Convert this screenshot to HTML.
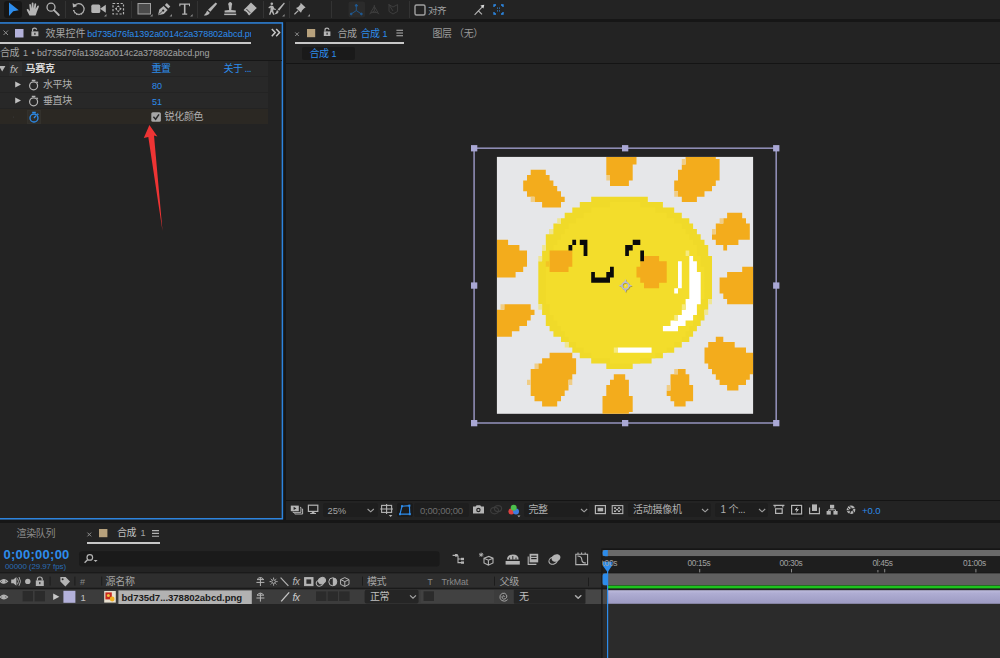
<!DOCTYPE html>
<html lang="zh-CN">
<head>
<meta charset="utf-8">
<title>After Effects</title>
<style>
*{box-sizing:border-box;margin:0;padding:0}
html,body{width:1000px;height:658px;overflow:hidden;background:#161616}
body{position:relative;font-family:"Liberation Sans","Noto Sans CJK SC",sans-serif;font-size:11px;color:#a8a8a8;line-height:1}
.abs{position:absolute}
.t{position:absolute;white-space:nowrap;line-height:14px;height:14px}
.blue{color:#2d8ceb}
svg{position:absolute;overflow:visible}
/* toolbar */
#toolbar{left:0;top:0;width:1000px;height:19px;background:#232323}
/* left panel */
#lp{left:0;top:22px;width:283px;height:497.6px;background:#232323}
#rp{left:286px;top:22px;width:714px;height:498px;background:#232323}
#tl{left:0;top:523px;width:1000px;height:135px;background:#232323}
.row{position:absolute;left:0;width:268px;height:15px;background:#282828}
.lat{font-size:9px;letter-spacing:-0.05px}
.dd{background:#1e1e1e;border-radius:2px}
.rl{top:555.5px;font-size:8.4px;color:#a0a0a0;letter-spacing:-0.38px}
</style>
</head>
<body>
<!-- TOOLBAR -->
<div id="toolbar" class="abs">
 <div class="abs" style="left:4px;top:1px;width:18px;height:17px;background:#161616;border-radius:3px"></div>
 <svg style="left:0;top:0" width="520" height="19" viewBox="0 0 520 19">
  <!-- selection arrow -->
  <path d="M9 2.6 L18.8 10.2 L13.2 11.2 L9 15.9 Z" fill="#2d8ceb"/>
  <!-- hand -->
  <path d="M29.5 15.5 L27 10.8 Q26.2 9.3 27.3 9 Q28.2 8.8 29 10 L30 11.2 L29.3 5 Q29.2 3.9 30 3.9 Q30.8 3.9 31 5 L31.7 8.5 L31.7 3.6 Q31.7 2.6 32.6 2.6 Q33.5 2.6 33.5 3.6 L33.6 8.4 L34.5 4 Q34.7 3.1 35.5 3.2 Q36.3 3.4 36.2 4.4 L35.6 8.9 L37.3 6 Q37.8 5.2 38.5 5.6 Q39.1 6 38.8 6.9 L36.8 12 Q36.2 14 35.5 15.5 Z" fill="#b4b4b4"/>
  <!-- magnifier -->
  <circle cx="51" cy="7.2" r="4" fill="none" stroke="#b4b4b4" stroke-width="1.3"/>
  <path d="M54 10.2 L58.8 15" stroke="#b4b4b4" stroke-width="1.8" stroke-linecap="round"/>
  <!-- sep -->
  <rect x="65" y="1" width="1" height="17" fill="#333"/>
  <!-- rotate -->
  <path d="M74.5 5.8 A5.3 5.3 0 1 1 73.6 10" fill="none" stroke="#b4b4b4" stroke-width="1.2"/>
  <path d="M73.6 10 A5.3 5.3 0 0 0 83 12.6" fill="none" stroke="#b4b4b4" stroke-width="1.2" stroke-dasharray="1.2 1.2"/>
  <path d="M72.6 3 L73 7.6 L77.2 6 Z" fill="#b4b4b4"/>
  <!-- camera -->
  <rect x="91.3" y="4.6" width="9" height="8.4" rx="1.6" fill="#b4b4b4"/>
  <path d="M100 8.8 L105.8 4.8 L105.8 12.8 Z" fill="#b4b4b4"/>
  <path d="M106.5 14 L106.5 16.5 L104 16.5 Z" fill="#8a8a8a"/>
  <!-- pan behind -->
  <rect x="113" y="3.5" width="10.5" height="10.5" fill="none" stroke="#b4b4b4" stroke-width="1.2" stroke-dasharray="2.2 1.6"/>
  <path d="M114.8 8.8 L117 7.2 L117 10.4 Z M121.8 8.8 L119.6 7.2 L119.6 10.4 Z M118.3 5.3 L116.8 7 L119.8 7 Z M118.3 12.3 L116.8 10.6 L119.8 10.6 Z" fill="#b4b4b4"/>
  <rect x="131" y="1" width="1" height="17" fill="#333"/>
  <!-- rect tool -->
  <rect x="138" y="3.5" width="12.5" height="10.5" fill="#4b4b4b" stroke="#a0a0a0" stroke-width="1"/>
  <path d="M152.6 14 L152.6 16.5 L150.1 16.5 Z" fill="#8a8a8a"/>
  <!-- pen -->
  <path d="M158 15.2 L159.3 9.6 L163.6 6 L167.6 10 L163.8 14 Z" fill="#b4b4b4"/>
  <path d="M164.8 5 L166.8 3 L170.3 6.6 L168.4 8.6 Z" fill="#b4b4b4"/>
  <circle cx="163.2" cy="10.6" r="1.1" fill="#232323"/>
  <path d="M158.3 15 L162.6 11" stroke="#232323" stroke-width="0.8"/>
  <path d="M172 14 L172 16.5 L169.5 16.5 Z" fill="#8a8a8a"/>
  <!-- T -->
  <path d="M179.3 3.4 H190 V6.2 H189 V4.8 H185.5 V13.6 H187.2 V14.8 H182.2 V13.6 H183.9 V4.8 H180.4 V6.2 H179.3 Z" fill="#b4b4b4"/>
  <path d="M192.6 14 L192.6 16.5 L190.1 16.5 Z" fill="#8a8a8a"/>
  <rect x="197" y="1" width="1" height="17" fill="#333"/>
  <!-- brush -->
  <path d="M215.6 2.4 L217.2 3.8 L210.4 11.8 L208 9.8 Z" fill="#b4b4b4"/>
  <path d="M207.2 10.6 L209.8 12.8 Q208.8 15.6 203.8 15.6 Q206 13.6 207.2 10.6 Z" fill="#b4b4b4"/>
  <!-- stamp -->
  <path d="M228.6 5.4 A2 2 0 1 1 231.8 5.4 L231.3 10 L235.8 10.6 L235.8 12.6 L224.6 12.6 L224.6 10.6 L229.1 10 Z" fill="#b4b4b4"/>
  <rect x="224.2" y="13.6" width="12" height="1.5" fill="#b4b4b4"/>
  <!-- eraser -->
  <path d="M251 2.6 L256.8 8 L249.2 15.4 L243.6 10 Z" fill="#b4b4b4"/>
  <path d="M245.3 11.6 L247.6 13.8" stroke="#232323" stroke-width="1" />
  <path d="M246.4 9 L250.2 12.8" stroke="#232323" stroke-width="0.9"/>
  <rect x="263" y="1" width="1" height="17" fill="#333"/>
  <!-- roto brush -->
  <circle cx="271.8" cy="3.8" r="1.3" fill="#b4b4b4"/>
  <path d="M268.4 7.2 L271 5.6 L273.2 6 L274.4 8.4 L276 9 L275.6 10 L273.4 9.4 L273.2 11 L274.6 14.6 L273.4 15 L271.6 11.8 L270.2 15 L269 14.6 L270.4 10.6 L270.6 7.6 L269 8.4 Z" fill="#b4b4b4"/>
  <path d="M284 2.6 L284.8 3.4 L279.2 10.8 L277.6 9.4 Z" fill="#b4b4b4"/>
  <path d="M277 10 L278.6 11.5 Q278 14.4 274.6 14.2 Q276.2 12.8 277 10 Z" fill="#b4b4b4"/>
  <path d="M284.6 14 L284.6 16.5 L282.1 16.5 Z" fill="#8a8a8a"/>
  <rect x="289" y="1" width="1" height="17" fill="#333"/>
  <!-- pin -->
  <path d="M300.6 2.8 L305.6 7.6 L304.2 8.2 L302 10.6 L301 12.8 L296 8 L298.2 7 L300.4 4.6 Z" fill="#b4b4b4"/>
  <path d="M298.2 10.6 L294.4 14.4" stroke="#b4b4b4" stroke-width="1.3"/>
  <path d="M310 14 L310 16.5 L307.5 16.5 Z" fill="#8a8a8a"/>
  <rect x="331" y="1" width="1" height="17" fill="#333"/>
  <!-- axis modes -->
  <rect x="348.5" y="1.5" width="16.5" height="16" rx="2" fill="#2b2b2b"/>
  <g stroke="#1e5a94" stroke-width="0.9" fill="#1e5a94">
   <path d="M356.3 5.4 V10.6 L351.4 13.8 M356.3 10.6 L361.2 13.8" fill="none"/>
   <path d="M356.3 4 L355 6 H357.6 Z"/><circle cx="351.2" cy="14" r="0.9"/><circle cx="361.4" cy="14" r="0.9"/>
  </g>
  <g stroke="#3d3d3d" stroke-width="1" fill="none">
   <path d="M374.3 5 V11 L369.4 14 M374.3 11 L379.2 14 M374.3 6.4 L370.6 12.6 H378 Z"/>
   <path d="M389 4.6 L393 7 L397.6 4.6 V11.4 L393 14 L389 11.4 Z M388.6 4.2 L393 11"/>
  </g>
  <rect x="409" y="1" width="1" height="17" fill="#333"/>
  <!-- snap checkbox -->
  <rect x="415" y="5" width="10" height="10" rx="1.5" fill="none" stroke="#a0a0a0" stroke-width="1.4"/>
  <!-- expand -->
  <path d="M474.6 14.8 L478.4 10.8 L482 14.4" fill="none" stroke="#b4b4b4" stroke-width="1.1"/>
  <path d="M478.4 10.8 L482.6 6.6" stroke="#b4b4b4" stroke-width="1.1"/>
  <path d="M484.3 4.8 L480.4 5.6 L483.4 8.6 Z" fill="#dcdcdc"/>
  <!-- blue dotted -->
  <g stroke="#2d8ceb" stroke-width="1.3" fill="none">
   <path d="M494 7 V5 H496 M501 5 H503 V7 M503 12 V14 H501 M496 14 H494 V12"/>
   <path d="M497.2 8.2 h0.8 M499.2 8.2 h0.8 M497.2 10.8 h0.8 M499.2 10.8 h0.8" />
  </g>
 </svg>
 <div class="t" style="left:428px;top:3.5px;font-size:9.6px;color:#a0a0a0;letter-spacing:-0.5px">对齐</div>
</div>

<!-- LEFT PANEL : effect controls -->
<div id="lp" class="abs"></div>
<svg style="left:0;top:0" width="290" height="525" viewBox="0 0 290 525"><rect x="-3" y="22.95" width="285.4" height="495.8" fill="none" stroke="#2d84de" stroke-width="1.5"/></svg>
<div class="abs" id="lpc" style="left:0;top:0;width:282px;height:520px;overflow:hidden">
 <!-- tab -->
 <div class="abs" style="left:0;top:42px;width:251px;height:2px;background:#c8c8c8"></div>
 <svg style="left:0;top:22px" width="282" height="22" viewBox="0 22 282 22">
  <path d="M3.5 30.5 L8 35 M8 30.5 L3.5 35" stroke="#8c8c8c" stroke-width="1"/>
  <rect x="15" y="29" width="8.5" height="8.5" fill="#b3b1da"/>
  <path d="M32.6 31.6 V30 Q32.6 28.2 34.6 28.2 Q36.4 28.2 36.6 29.8" fill="none" stroke="#b4b4b4" stroke-width="1.2"/>
  <rect x="31.4" y="31.4" width="7" height="4.8" fill="#b4b4b4"/>
  <rect x="34.3" y="32.8" width="1.2" height="2" fill="#232323"/>
  <path d="M271.8 29 L275.2 32.6 L271.8 36.2 M276.2 29 L279.6 32.6 L276.2 36.2" fill="none" stroke="#c8c8c8" stroke-width="1.5"/>
 </svg>
 <div class="abs" style="left:0;top:24px;width:251px;height:18px;overflow:hidden">
  <div class="t" style="left:45.5px;top:2.5px;font-size:10px;color:#a4a4a4">效果控件 <span class="blue lat" style="margin-left:-1px">bd735d76fa1392a0014c2a378802abcd.png</span></div>
 </div>
 <!-- subheader -->
 <div class="t" style="left:0;top:46px;font-size:10px;color:#a4a4a4"><span style="letter-spacing:-0.6px">合成</span> <span class="lat" style="margin-left:1.5px">1 <span style="margin-left:1px">•</span> bd735d76fa1392a0014c2a378802abcd.png</span></div>
 <div class="abs" style="left:0;top:60px;width:282px;height:1px;background:#161616"></div>
 <!-- rows -->
 <div class="row" style="top:61px"></div>
 <div class="row" style="top:77px"></div>
 <div class="row" style="top:93px"></div>
 <div class="row" style="top:109px;background:#2b2823"></div>
 <div class="abs" style="left:9px;top:62px;width:13px;height:14px;background:#2e2e2e"></div>
 <div class="abs" style="left:27px;top:110px;width:14px;height:14px;background:#2f2d29;border:1px solid #33312c"></div>
 <svg style="left:0;top:61px" width="282" height="64" viewBox="0 61 282 64">
  <path d="M-1 66 H5.4 L2.2 71.6 Z" fill="#b4b4b4"/>
  <path d="M15.2 81.6 L21 84.6 L15.2 87.6 Z M15.2 97.6 L21 100.6 L15.2 103.6 Z" fill="#c0c0c0"/>
  <g fill="none" stroke="#b4b4b4" stroke-width="1.2">
   <circle cx="33.6" cy="85.8" r="4"/><path d="M31.8 80.4 H35.4 M36.6 81.6 L37.8 82.8" />
   <circle cx="33.6" cy="101.8" r="4"/><path d="M31.8 96.4 H35.4 M36.6 97.6 L37.8 98.8"/>
  </g>
  <g fill="none" stroke="#2d8ceb" stroke-width="1.3">
   <circle cx="34" cy="118" r="4"/><path d="M32.2 112.4 H35.8 M37.2 113.6 L38.4 114.8 M34 118 L36 115.6"/>
  </g>
  <rect x="13" y="116.6" width="1" height="1" fill="#3a3a3a"/>
  <rect x="151.3" y="112.2" width="9.6" height="9.6" rx="1.5" fill="#a6a6a6"/>
  <path d="M153.4 116.8 L155.6 119.2 L159 114.4" fill="none" stroke="#2a2a2a" stroke-width="1.5"/>
  <path d="M149.4 125 L157.4 136.5 L154 135.6 L162.5 231 L148.3 137 L143.8 138 Z" fill="#ee3434"/>
 </svg>
 <div class="t" style="left:10px;top:62px;font-size:11px;font-style:italic;color:#b4b4b4;letter-spacing:-0.6px">fx</div>
 <div class="t" style="left:25.5px;top:62px;font-size:10px;font-weight:bold;color:#dadada;letter-spacing:-0.3px">马赛克</div>
 <div class="t blue" style="left:151.5px;top:62px;font-size:10px;letter-spacing:-0.6px">重置</div>
 <div class="t blue" style="left:223.5px;top:62px;font-size:10px;letter-spacing:-0.6px">关于 ...</div>
 <div class="t" style="left:43px;top:78px;font-size:10px;color:#b0b0b0;letter-spacing:-0.4px">水平块</div>
 <div class="t" style="left:43px;top:94px;font-size:10px;color:#b0b0b0;letter-spacing:-0.4px">垂直块</div>
 <div class="t blue lat" style="left:152px;top:79px">80</div>
 <div class="t blue lat" style="left:152px;top:95px">51</div>
 <div class="t" style="left:164.5px;top:110px;font-size:10px;color:#b0b0b0;letter-spacing:-0.3px">锐化颜色</div>
</div>

<!-- RIGHT PANEL : composition viewer -->
<div id="rp" class="abs"></div>
<!-- right panel header -->
<div class="abs" style="left:295px;top:42px;width:109px;height:2px;background:#c8c8c8"></div>
<svg style="left:286px;top:22px" width="230" height="22" viewBox="286 22 230 22">
 <path d="M295.2 32.4 L298.8 36 M298.8 32.4 L295.2 36" stroke="#8c8c8c" stroke-width="1"/>
 <rect x="307" y="29" width="8.2" height="8.2" fill="#b7a17c"/>
 <path d="M325 31.6 V30 Q325 28.2 327 28.2 Q328.8 28.2 329 29.8" fill="none" stroke="#b4b4b4" stroke-width="1.2"/>
 <rect x="323.8" y="31.4" width="6.6" height="4.6" fill="#b4b4b4"/>
 <rect x="326.5" y="32.7" width="1.2" height="2" fill="#232323"/>
 <path d="M396.4 30.2 H403 M396.4 33 H403 M396.4 35.8 H403" stroke="#b4b4b4" stroke-width="1.1"/>
</svg>
<div class="t" style="left:337.5px;top:26.5px;font-size:10px;color:#a4a4a4;letter-spacing:-0.6px">合成</div>
<div class="t blue" style="left:360.5px;top:26.5px;font-size:10px;letter-spacing:-0.6px">合成 <span class="lat" style="margin-left:1px">1</span></div>
<div class="t" style="left:432.5px;top:26.5px;font-size:10px;color:#9a9a9a;letter-spacing:-0.4px">图层 （无）</div>
<div class="abs" style="left:302px;top:47px;width:53px;height:13px;background:#1a1a1a;border-radius:2px"></div>
<div class="t blue" style="left:309.5px;top:47px;font-size:10px;letter-spacing:-0.6px">合成 <span class="lat" style="margin-left:1px">1</span></div>
<div class="abs" style="left:286px;top:62.5px;width:714px;height:1px;background:#141414"></div>
<!-- viewer toolbar -->
<div class="abs" style="left:286px;top:500px;width:714px;height:1px;background:#141414"></div>
<div class="abs dd" style="left:322.5px;top:503px;width:55px;height:14px"></div>
<div class="abs dd" style="left:397px;top:503px;width:15.5px;height:14px;background:#1b1b1b"></div>
<div class="abs dd" style="left:414px;top:503px;width:55px;height:14px"></div>
<div class="abs dd" style="left:524px;top:503px;width:65px;height:14px"></div>
<div class="abs dd" style="left:628px;top:503px;width:82.5px;height:14px"></div>
<div class="abs dd" style="left:715px;top:503px;width:52.5px;height:14px"></div>
<div class="abs dd" style="left:789.5px;top:503px;width:14.5px;height:14px;background:#1b1b1b"></div>
<div class="t lat" style="left:327.5px;top:503.5px;font-size:9.4px;color:#a4a4a4">25%</div>
<div class="t lat" style="left:420px;top:503.5px;font-size:9.5px;color:#6e6e6e;letter-spacing:-0.2px">0;00;00;00</div>
<div class="t" style="left:528.5px;top:503px;font-size:10px;color:#b0b0b0;letter-spacing:-0.4px">完整</div>
<div class="t" style="left:633px;top:503px;font-size:10px;color:#b0b0b0;letter-spacing:-0.25px">活动摄像机</div>
<div class="t" style="left:720.5px;top:503px;font-size:10px;color:#b0b0b0;letter-spacing:-0.4px"><span class="lat" style="font-size:10px">1</span> 个...</div>
<div class="t blue lat" style="left:862px;top:503.5px;font-size:9.5px">+0.0</div>
<svg style="left:286px;top:501px" width="714" height="19" viewBox="286 501 714 19">
 <!-- always preview -->
 <g fill="#b4b4b4"><rect x="290.8" y="505.6" width="8" height="5.6"/><path d="M300 507.4 H300.9 V512.4 H293 V511.6 M301.8 509 H302.6 V514 H294.8 V513.2" fill="none" stroke="#b4b4b4" stroke-width="1"/></g>
 <path d="M293.6 506.8 L296.4 508.4 L293.6 510 Z" fill="#232323"/>
 <!-- monitor -->
 <rect x="308.4" y="505.2" width="9.4" height="6.2" fill="none" stroke="#b4b4b4" stroke-width="1.2"/>
 <path d="M311.8 512 H314.4 V513 H316 V514 H310.2 V513 H311.8 Z" fill="#b4b4b4"/>
 <!-- chevrons -->
 <g fill="none" stroke="#a0a0a0" stroke-width="1.1">
  <path d="M367.6 509 L370.7 511.8 L373.8 509"/>
  <path d="M581 509 L584.1 511.8 L587.2 509"/>
  <path d="M702 509 L705.1 511.8 L708.2 509"/>
  <path d="M759 509 L762.1 511.8 L765.2 509"/>
 </g>
 <!-- region of interest -->
 <g fill="none" stroke="#b4b4b4" stroke-width="1.1">
  <rect x="381.6" y="505.4" width="10" height="7"/>
  <path d="M386.6 504 V514 M380.2 509 H393"/>
 </g>
 <path d="M388.8 515 H392.4 L390.6 517 Z" fill="#b4b4b4"/>
 <!-- mask toggle blue -->
 <g fill="none" stroke="#2d8ceb" stroke-width="1.2">
  <path d="M400 514.2 L402 506.2 L409.4 505.6 L409.8 514.2 Z"/>
 </g>
 <g fill="#2d8ceb"><rect x="399" y="513.2" width="2" height="2"/><rect x="401" y="505.2" width="2" height="2"/><rect x="408.4" y="504.6" width="2" height="2"/><rect x="408.8" y="513.2" width="2" height="2"/></g>
 <!-- camera -->
 <path d="M473 506.6 H475.6 L476.6 505.2 H480.2 L481.2 506.6 H484 V513.6 H473 Z" fill="#b4b4b4"/>
 <circle cx="478.4" cy="510" r="2.2" fill="#232323"/><circle cx="478.4" cy="510" r="1.1" fill="#b4b4b4"/>
 <!-- show snapshot (dim) -->
 <g fill="none" stroke="#3c3c3c" stroke-width="1.2"><ellipse cx="494.6" cy="510.6" rx="4" ry="3.2"/><ellipse cx="498" cy="508.6" rx="3.6" ry="3"/></g>
 <!-- rgb -->
 <circle cx="511.4" cy="511.6" r="3" fill="#e04040"/><circle cx="516" cy="511.6" r="3" fill="#3f7de0"/><circle cx="513.7" cy="507.8" r="3" fill="#4cc04c"/>
 <path d="M517.4 515.6 H520.4 L518.9 517.2 Z" fill="#b4b4b4"/>
 <!-- fast preview / transparency -->
 <rect x="595.4" y="505.6" width="10" height="8" fill="none" stroke="#b4b4b4" stroke-width="1.2"/><rect x="597.6" y="507.8" width="5.6" height="3.6" fill="#b4b4b4"/>
 <rect x="612.2" y="505.6" width="10.6" height="8" fill="none" stroke="#b4b4b4" stroke-width="1.1"/>
 <g fill="#b4b4b4"><rect x="614" y="507.2" width="2" height="1.6"/><rect x="618" y="507.2" width="2" height="1.6"/><rect x="616" y="508.8" width="2" height="1.6"/><rect x="620" y="508.8" width="1.4" height="1.6"/><rect x="614" y="510.4" width="2" height="1.6"/><rect x="618" y="510.4" width="2" height="1.6"/></g>
 <!-- right icons -->
 <g fill="none" stroke="#b4b4b4" stroke-width="1.2">
  <path d="M773.4 505.4 H784.4 M775 505.4 V507.4 M782.8 505.4 V507.4"/><rect x="775.6" y="508.8" width="6.6" height="4.6"/>
  <rect x="791.6" y="505.4" width="10" height="8.6"/>
  <path d="M809.6 507.4 V513.6 H819.4 V507.4"/><rect x="812.6" y="505" width="3.8" height="5.4" fill="#b4b4b4"/>
 </g>
 <path d="M797.6 506.6 L794.6 510.2 H796.8 L795.8 513 L799 509.2 H796.8 Z" fill="#d0d0d0"/>
 <g fill="#b4b4b4"><rect x="830" y="504.8" width="4.2" height="3.6"/><rect x="826.6" y="511" width="4.2" height="3.6"/><rect x="833.4" y="511" width="4.2" height="3.6"/></g>
 <path d="M832.1 508.4 V509.8 H828.7 V511 M832.1 509.8 H835.5 V511" fill="none" stroke="#b4b4b4" stroke-width="1"/>
 <!-- aperture -->
 <circle cx="851" cy="509.8" r="4.3" fill="#b4b4b4"/>
 <g stroke="#232323" stroke-width="0.9"><path d="M849 505.8 L852.6 509 M855 508.2 L850.6 509.6 M854 513 L852 508.8 M849.6 514 L851.4 509.6 M846.8 510.6 L851 510.8 M847.4 507.4 L850.6 511"/></g>
 <circle cx="851" cy="509.8" r="1.5" fill="#232323"/>
</svg>
<svg id="sun" style="left:0;top:0" width="1000" height="658" viewBox="0 0 1000 658">
<defs><clipPath id="cimg"><rect x="496.9" y="156.9" width="256.2" height="256.9"/></clipPath></defs>
<rect x="496.9" y="156.9" width="256.2" height="256.9" fill="#e6e7e9"/>
<g clip-path="url(#cimg)">
<path fill="#f0da29" d="M579.8 358.2 579.8 352.8 572.3 352.8 572.3 347.4 568.5 347.4 568.5 342.0 561.0 342.0 561.0 336.7 553.4 336.7 553.4 331.3 549.6 331.3 549.6 325.9 545.8 325.9 545.8 315.1 542.1 315.1 542.1 304.3 538.3 304.3 538.3 261.3 542.1 261.3 542.1 250.5 545.8 250.5 545.8 234.3 549.6 234.3 549.6 229.0 553.4 229.0 553.4 223.6 561.0 223.6 561.0 218.2 564.7 218.2 564.7 212.8 572.3 212.8 572.3 207.4 579.8 207.4 579.8 202.0 591.2 202.0 591.2 196.7 647.8 196.7 647.8 202.0 662.9 202.0 662.9 207.4 674.2 207.4 674.2 212.8 681.8 212.8 681.8 218.2 689.3 218.2 689.3 223.6 693.1 223.6 693.1 229.0 696.9 229.0 696.9 234.3 700.7 234.3 700.7 239.7 704.5 239.7 704.5 245.1 708.2 245.1 708.2 255.9 712.0 255.9 712.0 299.0 708.2 299.0 708.2 309.7 704.5 309.7 704.5 320.5 700.7 320.5 700.7 325.9 696.9 325.9 696.9 331.3 693.1 331.3 693.1 336.7 689.3 336.7 689.3 342.0 681.8 342.0 681.8 347.4 674.2 347.4 674.2 352.8 662.9 352.8 662.9 358.2 651.6 358.2 651.6 363.6 632.7 363.6 632.7 369.0 606.3 369.0 606.3 363.6 591.2 363.6 591.2 358.2z"/>
<path fill="#f3dd2b" d="M610.0 282.8 610.0 277.4 613.8 277.4 613.8 266.7 610.0 266.7 610.0 272.0 606.3 272.0 606.3 277.4 594.9 277.4 594.9 272.0 591.2 272.0 591.2 282.8zM681.8 315.1 674.2 315.1 674.2 320.5 670.5 320.5 670.5 325.9 662.9 325.9 662.9 331.3 678.0 331.3 678.0 325.9 685.6 325.9 685.6 320.5 693.1 320.5 693.1 315.1 696.9 315.1 696.9 320.5 693.1 320.5 693.1 325.9 689.3 325.9 689.3 331.3 685.6 331.3 685.6 336.7 681.8 336.7 681.8 342.0 674.2 342.0 674.2 347.4 666.7 347.4 666.7 352.8 655.4 352.8 655.4 358.2 640.3 358.2 640.3 363.6 610.0 363.6 610.0 358.2 591.2 358.2 591.2 352.8 583.6 352.8 583.6 347.4 576.1 347.4 576.1 342.0 568.5 342.0 568.5 336.7 564.7 336.7 564.7 331.3 561.0 331.3 561.0 325.9 557.2 325.9 557.2 320.5 553.4 320.5 553.4 315.1 549.6 315.1 549.6 304.3 545.8 304.3 545.8 266.7 549.6 266.7 549.6 272.0 568.5 272.0 568.5 266.7 572.3 266.7 572.3 245.1 576.1 245.1 576.1 239.7 572.3 239.7 572.3 245.1 568.5 245.1 568.5 250.5 553.4 250.5 553.4 245.1 557.2 245.1 557.2 239.7 561.0 239.7 561.0 234.3 564.7 234.3 564.7 229.0 568.5 229.0 568.5 223.6 576.1 223.6 576.1 218.2 583.6 218.2 583.6 212.8 591.2 212.8 591.2 207.4 610.0 207.4 610.0 202.0 640.3 202.0 640.3 207.4 655.4 207.4 655.4 212.8 666.7 212.8 666.7 218.2 674.2 218.2 674.2 223.6 681.8 223.6 681.8 229.0 685.6 229.0 685.6 234.3 689.3 234.3 689.3 239.7 693.1 239.7 693.1 245.1 696.9 245.1 696.9 255.9 700.7 255.9 700.7 266.7 704.5 266.7 704.5 299.0 700.7 299.0 700.7 272.0 696.9 272.0 696.9 261.3 693.1 261.3 693.1 255.9 689.3 255.9 689.3 250.5 685.6 250.5 685.6 255.9 689.3 255.9 689.3 299.0 685.6 299.0 685.6 304.3 681.8 304.3zM587.4 239.7 579.8 239.7 579.8 245.1 583.6 245.1 583.6 255.9 587.4 255.9zM681.8 288.2 681.8 261.3 678.0 261.3 678.0 288.2 674.2 288.2 674.2 293.6 678.0 293.6 678.0 288.2zM666.7 282.8 666.7 261.3 659.1 261.3 659.1 255.9 644.0 255.9 644.0 250.5 640.3 250.5 640.3 266.7 636.5 266.7 636.5 277.4 640.3 277.4 640.3 282.8 644.0 282.8 644.0 288.2 659.1 288.2 659.1 282.8zM613.8 347.4 613.8 352.8 651.6 352.8 651.6 347.4zM632.7 245.1 625.2 245.1 625.2 255.9 628.9 255.9 628.9 250.5 632.7 250.5zM632.7 245.1 640.3 245.1 640.3 239.7 632.7 239.7zM700.7 309.7 696.9 309.7 696.9 304.3 700.7 304.3z"/>
<path fill="#f3ac1c" d="M534.5 401.3 534.5 395.9 530.7 395.9 530.7 369.0 538.3 369.0 538.3 363.6 542.1 363.6 542.1 358.2 549.6 358.2 549.6 352.8 572.3 352.8 572.3 358.2 576.1 358.2 576.1 374.3 572.3 374.3 572.3 379.7 568.5 379.7 568.5 390.5 564.7 390.5 564.7 395.9 561.0 395.9 561.0 401.3 557.2 401.3 557.2 406.6 542.1 406.6 542.1 401.3zM670.5 374.3 678.0 374.3 678.0 369.0 685.6 369.0 685.6 374.3 689.3 374.3 689.3 385.1 693.1 385.1 693.1 401.3 685.6 401.3 685.6 406.6 674.2 406.6 674.2 401.3 670.5 401.3 670.5 395.9 666.7 395.9 666.7 390.5 670.5 390.5zM549.6 250.5 572.3 250.5 572.3 266.7 568.5 266.7 568.5 272.0 549.6 272.0zM610.0 185.9 610.0 175.1 606.3 175.1 606.3 153.6 636.5 153.6 636.5 164.4 632.7 164.4 632.7 180.5 628.9 180.5 628.9 185.9zM557.2 185.9 557.2 191.3 561.0 191.3 561.0 196.7 564.7 196.7 564.7 202.0 561.0 202.0 561.0 207.4 542.1 207.4 542.1 202.0 534.5 202.0 534.5 196.7 527.0 196.7 527.0 191.3 523.2 191.3 523.2 180.5 527.0 180.5 527.0 175.1 530.7 175.1 530.7 169.7 545.8 169.7 545.8 175.1 549.6 175.1 549.6 180.5 553.4 180.5 553.4 185.9zM674.2 180.5 678.0 180.5 678.0 169.7 681.8 169.7 681.8 164.4 685.6 164.4 685.6 153.6 715.8 153.6 715.8 159.0 719.6 159.0 719.6 180.5 715.8 180.5 715.8 185.9 712.0 185.9 712.0 191.3 704.5 191.3 704.5 196.7 696.9 196.7 696.9 202.0 681.8 202.0 681.8 196.7 678.0 196.7 678.0 191.3 674.2 191.3zM715.8 342.0 715.8 336.7 723.3 336.7 723.3 342.0 734.7 342.0 734.7 347.4 746.0 347.4 746.0 352.8 753.5 352.8 753.5 374.3 749.8 374.3 749.8 379.7 746.0 379.7 746.0 385.1 738.4 385.1 738.4 390.5 727.1 390.5 727.1 385.1 719.6 385.1 719.6 379.7 715.8 379.7 715.8 374.3 712.0 374.3 712.0 369.0 708.2 369.0 708.2 363.6 704.5 363.6 704.5 347.4 708.2 347.4 708.2 342.0zM508.1 239.7 508.1 245.1 519.4 245.1 519.4 250.5 527.0 250.5 527.0 266.7 523.2 266.7 523.2 272.0 515.6 272.0 515.6 277.4 496.8 277.4 496.8 239.7zM659.1 255.9 659.1 261.3 666.7 261.3 666.7 282.8 659.1 282.8 659.1 288.2 644.0 288.2 644.0 282.8 640.3 282.8 640.3 277.4 636.5 277.4 636.5 266.7 640.3 266.7 640.3 261.3 644.0 261.3 644.0 255.9zM738.4 245.1 727.1 245.1 727.1 250.5 723.3 250.5 723.3 245.1 715.8 245.1 715.8 239.7 712.0 239.7 712.0 234.3 715.8 234.3 715.8 223.6 723.3 223.6 723.3 218.2 727.1 218.2 727.1 212.8 742.2 212.8 742.2 218.2 746.0 218.2 746.0 223.6 749.8 223.6 749.8 239.7 738.4 239.7zM727.1 304.3 727.1 299.0 723.3 299.0 723.3 293.6 719.6 293.6 719.6 277.4 727.1 277.4 727.1 272.0 742.2 272.0 742.2 266.7 753.5 266.7 753.5 304.3zM519.4 325.9 519.4 331.3 511.9 331.3 511.9 336.7 496.8 336.7 496.8 309.7 504.3 309.7 504.3 304.3 530.7 304.3 530.7 309.7 534.5 309.7 534.5 315.1 530.7 315.1 530.7 320.5 527.0 320.5 527.0 325.9zM625.2 379.7 628.9 379.7 628.9 395.9 632.7 395.9 632.7 412.0 628.9 412.0 628.9 417.4 602.5 417.4 602.5 395.9 606.3 395.9 606.3 385.1 610.0 385.1 610.0 379.7 613.8 379.7 613.8 374.3 625.2 374.3z"/>
<path fill="#ffffff" d="M617.6 352.8 617.6 347.4 651.6 347.4 651.6 352.8zM678.0 325.9 678.0 331.3 662.9 331.3 662.9 325.9 670.5 325.9 670.5 320.5 678.0 320.5 678.0 315.1 681.8 315.1 681.8 309.7 685.6 309.7 685.6 299.0 689.3 299.0 689.3 255.9 693.1 255.9 693.1 261.3 696.9 261.3 696.9 272.0 700.7 272.0 700.7 304.3 696.9 304.3 696.9 315.1 693.1 315.1 693.1 320.5 685.6 320.5 685.6 325.9zM678.0 288.2 678.0 261.3 681.8 261.3 681.8 288.2zM678.0 288.2 678.0 293.6 674.2 293.6 674.2 288.2z"/>
<path fill="#0a0a0a" d="M591.2 272.0 594.9 272.0 594.9 277.4 606.3 277.4 606.3 272.0 610.0 272.0 610.0 266.7 613.8 266.7 613.8 277.4 610.0 277.4 610.0 282.8 591.2 282.8zM628.9 255.9 625.2 255.9 625.2 245.1 632.7 245.1 632.7 250.5 628.9 250.5zM644.0 250.5 644.0 261.3 640.3 261.3 640.3 250.5zM632.7 245.1 632.7 239.7 640.3 239.7 640.3 245.1zM579.8 239.7 587.4 239.7 587.4 255.9 583.6 255.9 583.6 245.1 579.8 245.1zM576.1 239.7 576.1 245.1 572.3 245.1 572.3 239.7zM572.3 245.1 572.3 250.5 568.5 250.5 568.5 245.1z"/>
<path fill="#efe692" d="M549.6 234.3 549.6 229.0 553.4 229.0 553.4 234.3zM542.1 309.7 538.3 309.7 538.3 304.3 542.1 304.3zM564.7 342.0 568.5 342.0 568.5 347.4 564.7 347.4zM704.5 309.7 708.2 309.7 708.2 315.1 704.5 315.1zM538.3 261.3 538.3 255.9 542.1 255.9 542.1 261.3zM557.2 223.6 557.2 218.2 561.0 218.2 561.0 223.6zM542.1 250.5 542.1 245.1 545.8 245.1 545.8 250.5zM708.2 299.0 712.0 299.0 712.0 304.3 708.2 304.3z"/>
<path fill="#f0cd85" d="M712.0 229.0 715.8 229.0 715.8 234.3 712.0 234.3zM534.5 202.0 530.7 202.0 530.7 196.7 534.5 196.7zM568.5 379.7 572.3 379.7 572.3 385.1 568.5 385.1zM666.7 385.1 670.5 385.1 670.5 390.5 666.7 390.5zM723.3 223.6 719.6 223.6 719.6 218.2 723.3 218.2zM538.3 369.0 534.5 369.0 534.5 363.6 538.3 363.6zM610.0 175.1 610.0 180.5 606.3 180.5 606.3 175.1zM685.6 164.4 681.8 164.4 681.8 159.0 685.6 159.0zM504.3 309.7 500.5 309.7 500.5 304.3 504.3 304.3zM530.7 385.1 527.0 385.1 527.0 379.7 530.7 379.7zM674.2 196.7 674.2 191.3 678.0 191.3 678.0 196.7zM678.0 374.3 674.2 374.3 674.2 369.0 678.0 369.0z"/>
<path fill="#f2c424" d="M545.8 261.3 549.6 261.3 549.6 266.7 545.8 266.7z"/>
<path fill="#f6ea80" d="M681.8 309.7 681.8 304.3 685.6 304.3 685.6 309.7zM685.6 250.5 689.3 250.5 689.3 255.9 685.6 255.9zM617.6 352.8 613.8 352.8 613.8 347.4 617.6 347.4zM674.2 320.5 674.2 315.1 678.0 315.1 678.0 320.5z"/>
</g>
</svg>
<svg id="bbox" style="left:0;top:0" width="1000" height="658" viewBox="0 0 1000 658">
 <rect x="474.1" y="148.2" width="302.1" height="274.8" fill="none" stroke="#8e8cb4" stroke-width="1.6"/>
 <g fill="#a9a7d4">
  <rect x="471" y="145.1" width="6.3" height="6.3"/><rect x="622" y="145.1" width="6.3" height="6.3"/><rect x="773.1" y="145.1" width="6.3" height="6.3"/>
  <rect x="471" y="282.4" width="6.3" height="6.3"/><rect x="773.1" y="282.4" width="6.3" height="6.3"/>
  <rect x="471" y="420" width="6.3" height="6.3"/><rect x="622" y="420" width="6.3" height="6.3"/><rect x="773.1" y="420" width="6.3" height="6.3"/>
 </g>
 <!-- anchor point -->
 <g transform="translate(625.4 285.7)">
  <g transform="translate(0.7 0.7)" fill="#8f8540" stroke="none" opacity="0.8">
   <path d="M0 -6.8 L1.2 -3.6 L-1.2 -3.6 Z M0 6.8 L1.2 3.6 L-1.2 3.6 Z M-6.8 0 L-3.6 -1.2 L-3.6 1.2 Z M6.8 0 L3.6 -1.2 L3.6 1.2 Z"/>
   <circle r="3.4" fill="none" stroke="#8f8540" stroke-width="1.5"/>
  </g>
  <path d="M0 -6.8 L1.2 -3.6 L-1.2 -3.6 Z M0 6.8 L1.2 3.6 L-1.2 3.6 Z M-6.8 0 L-3.6 -1.2 L-3.6 1.2 Z M6.8 0 L3.6 -1.2 L3.6 1.2 Z" fill="#b9b9d6"/>
  <circle r="3.4" fill="none" stroke="#b9b9d6" stroke-width="1.5"/>
  <circle r="0.7" fill="#d8d8c0"/>
 </g>
</svg>

<!-- TIMELINE -->
<div id="tl" class="abs"></div>
<!-- timeline tabs -->
<div class="t" style="left:16.5px;top:527px;font-size:10px;color:#8a8a8a;letter-spacing:-0.35px">渲染队列</div>
<div class="abs" style="left:87px;top:541.6px;width:73px;height:2px;background:#c8c8c8"></div>
<svg style="left:0;top:523px" width="1000" height="135" viewBox="0 523 1000 135">
 <path d="M87.4 532.6 L91.2 536.4 M91.2 532.6 L87.4 536.4" stroke="#8c8c8c" stroke-width="1"/>
 <rect x="99" y="529" width="8.4" height="8.2" fill="#b7a17c"/>
 <path d="M152 530.6 H159 M152 533.4 H159 M152 536.2 H159" stroke="#b4b4b4" stroke-width="1.1"/>
 <!-- search box -->
 <rect x="79" y="551.2" width="360.6" height="15.4" rx="3" fill="#1a1a1a"/>
 <circle cx="89.8" cy="557.4" r="2.8" fill="none" stroke="#b4b4b4" stroke-width="1.2"/>
 <path d="M87.8 559.6 L84.6 562.8" stroke="#b4b4b4" stroke-width="1.4"/>
 <path d="M93.6 560 H97.6 L95.6 562 Z" fill="#b4b4b4"/>
 <!-- toolbar icons -->
 <g fill="none" stroke="#b4b4b4" stroke-width="1.1">
  <path d="M452.6 555.4 H458 M458 555.4 V562.6 H461 M458 559 H461"/>
  <rect x="455" y="554" width="2.6" height="2.6" fill="#b4b4b4" stroke="none"/><rect x="461" y="557.8" width="3" height="2.4" fill="#b4b4b4" stroke="none"/><rect x="461" y="561.4" width="3" height="2.4" fill="#b4b4b4" stroke="none"/>
  <path d="M484 558.2 L488.8 556.4 L493 558.2 V563 L488.4 565.2 L484 563 Z M484 558.2 L488.4 560.2 L493 558.2 M488.4 560.2 V565.2"/>
  <path d="M481.2 552.6 V556.8 M479 554.8 H483.4 M479.6 553.2 L482.8 556.4 M482.8 553.2 L479.6 556.4" stroke-width="0.9"/>
  <path d="M575.8 554.2 H587.6 V564.6 H575.8 Z M577.4 556 Q581.6 556 581.8 559.6 Q582 563 586 563 M578 552.6 V554.2 M581.6 552.6 V554.2 M585.2 552.6 V554.2"/>
 </g>
 <g fill="#b4b4b4">
  <path d="M507 559.6 Q507 554.6 512.8 554.6 Q518.6 554.6 518.6 559.6 Z"/><rect x="505.6" y="561" width="14.2" height="3.6"/>
  <rect x="529.6" y="553.8" width="8.6" height="8.6"/><path d="M528.2 556.4 V564.4 H536.4" fill="none" stroke="#b4b4b4" stroke-width="1.1"/>
  <ellipse cx="556" cy="558" rx="4.6" ry="3.6" transform="rotate(-25 556 558)"/><ellipse cx="553.2" cy="560.6" rx="4.4" ry="3.4" transform="rotate(-25 553.2 560.6)" fill="none" stroke="#b4b4b4" stroke-width="1.1"/>
 </g>
 <path d="M509.6 559.6 V557.6 M512.8 559.6 V556 M516 559.6 V557.6" stroke="#232323" stroke-width="0.9"/>
 <rect x="531.2" y="555.6" width="5.4" height="1.2" fill="#232323"/><rect x="531.2" y="558" width="5.4" height="1.2" fill="#232323"/>
 <!-- header row -->
 <rect x="0" y="572.4" width="602" height="1" fill="#161616"/>
 <rect x="0" y="573.4" width="602" height="14.4" fill="#2e2e2e"/>
 <rect x="0" y="587.8" width="1000" height="1.6" fill="#1a1a1a"/>
 <!-- layer row -->
 <rect x="0" y="589.4" width="588" height="14.6" fill="#3c3c3c"/>
 <rect x="585.4" y="589.4" width="16.2" height="14.6" fill="#464646"/>
 <!-- header icons -->
 <g fill="none" stroke="#b4b4b4" stroke-width="1.1">
  <path d="M0.2 581.4 Q3.8 577.6 7.6 581.4 Q3.8 585.2 0.2 581.4 Z"/><circle cx="3.8" cy="581.4" r="1.3" fill="#b4b4b4"/>
  <path d="M0.2 597 Q3.8 593.2 7.6 597 Q3.8 600.8 0.2 597 Z"/><circle cx="3.8" cy="597" r="1.3" fill="#b4b4b4"/>
  <path d="M17.4 578.4 Q19.6 581.4 17.4 584.4 M19 577 Q22 581.4 19 585.8" stroke-width="0.9"/>
  <path d="M37.4 580.4 V579 Q37.4 577 39.8 577 Q42.2 577 42.2 579 V580.4" stroke-width="1.2"/>
 </g>
 <g fill="#b4b4b4">
  <path d="M11.2 579.6 H13.4 L16.4 577 V585.8 L13.4 583.2 H11.2 Z"/>
  <circle cx="27.8" cy="581.4" r="2.7"/>
  <rect x="35.8" y="580.4" width="8" height="5.6"/>
  <path d="M60.4 577 H65.6 L70 581.6 L65.4 586.4 L60.4 581.6 Z"/>
 </g>
 <circle cx="62.6" cy="579.2" r="1" fill="#2e2e2e"/>
 <rect x="39.2" y="582" width="1.2" height="2.2" fill="#2e2e2e"/>
 <g fill="#1c1c1c"><rect x="49.6" y="576.6" width="1" height="9"/><rect x="74.4" y="576.6" width="1" height="9"/><rect x="101.2" y="576.6" width="1" height="9"/><rect x="362" y="576.6" width="1" height="9"/><rect x="494" y="576.6" width="1" height="9"/><rect x="588" y="577.6" width="1" height="8.6"/></g>
 <!-- layer row boxes -->
 <g fill="#2b2b2b"><rect x="22.6" y="591" width="10.4" height="10.4"/><rect x="34.6" y="591" width="10.4" height="10.4"/>
  <rect x="316" y="591.4" width="10.4" height="9.6"/><rect x="327.6" y="591.4" width="10.4" height="9.6"/><rect x="339.2" y="591.4" width="10.4" height="9.6"/>
  <rect x="423.6" y="591.4" width="10.4" height="9.6"/></g>
 <rect x="420.6" y="590" width="73.4" height="13.2" fill="#444" fill-opacity="0.6"/>
 <rect x="423.6" y="591.4" width="10.4" height="9.6" fill="#2b2b2b"/>
 <path d="M53.2 593.6 L59.4 596.8 L53.2 600 Z" fill="#c8c8c8"/>
 <rect x="63.4" y="590.8" width="12" height="12" fill="#b3b1da"/>
 <!-- file icon -->
 <rect x="104.2" y="591" width="11.6" height="11.6" fill="#e8e0d0"/>
 <rect x="105.4" y="592.4" width="6.4" height="7" fill="#c8281e"/><circle cx="112.2" cy="599" r="2.4" fill="#f0b020"/><circle cx="108.4" cy="595.4" r="1.5" fill="#f0c040"/>
 <!-- name box -->
 <rect x="118.4" y="590.4" width="133.4" height="13.6" fill="#b2b2b2"/>
 <!-- switches header -->
 <g fill="none" stroke="#b4b4b4" stroke-width="1">
  <path d="M257 579.6 Q260.4 575.4 263.8 579.6 Z M256.4 582.4 H264.4 M260.4 577.6 V586" />
  <path d="M257 595.2 Q260.4 591 263.8 595.2 Z M256.4 598 H264.4 M260.4 593.2 V601.6" />
  <circle cx="273.6" cy="581.6" r="1.8"/><path d="M273.6 577.6 V579 M273.6 584.2 V585.6 M269.6 581.6 H271 M276.2 581.6 H277.6 M270.8 578.8 L271.8 579.8 M275.4 583.4 L276.4 584.4 M276.4 578.8 L275.4 579.8 M271.8 583.4 L270.8 584.4"/>
  <path d="M280.6 577.6 L288.4 585.8" stroke-width="1.2"/>
  <path d="M281.2 601.4 L289.2 592.4" stroke-width="1.3" stroke="#c8c8c8"/>
  <rect x="304.6" y="577.6" width="8.4" height="8" fill="#b4b4b4"/>
  <ellipse cx="322" cy="580.6" rx="3.6" ry="3" transform="rotate(-30 322 580.6)" fill="#b4b4b4"/><ellipse cx="319.8" cy="583" rx="3.6" ry="3" transform="rotate(-30 319.8 583)"/>
  <circle cx="332.8" cy="581.8" r="4"/>
  <path d="M340.6 579.6 L344.8 577.6 L349 579.6 V584.4 L344.8 586.4 L340.6 584.4 Z M340.6 579.6 L344.8 581.6 L349 579.6 M344.8 581.6 V586.4"/>
 </g>
 <path d="M332.8 577.8 A4 4 0 0 1 332.8 585.8 Z" fill="#b4b4b4"/>
 <rect x="306.4" y="579.4" width="4.8" height="4.4" fill="#2e2e2e"/>
 <!-- mode dropdown -->
 <rect x="364.6" y="589.8" width="54" height="13.8" rx="2" fill="#252525"/>
 <rect x="513.8" y="589.6" width="71.6" height="14.2" rx="1" fill="#242424"/>
 <g fill="none" stroke="#a8a8a8" stroke-width="1.1"><path d="M410 595.4 L413 598.2 L416 595.4"/><path d="M575.4 595.4 L578.4 598.2 L581.4 595.4"/><path d="M574.8 595.6 L577.8 598.4 L580.8 595.6" transform="translate(0 0)" stroke="none"/>
  <path d="M575 595 L577.9 598 L580.8 595" stroke="none"/>
 </g>
 <path d="M575 594.6 L578 597.6 L581 594.6" fill="none" stroke="#a8a8a8" stroke-width="1.1" transform="translate(0 1)" opacity="0"/>
 <path d="M574.6 595.6 L577.8 598.6 L581 595.6" fill="none" stroke="#a8a8a8" stroke-width="1.1" opacity="0"/>
 <!-- pickwhip spiral -->
 <path d="M504.4 597 Q504.2 595.4 502.9 595.8 Q501.6 596.4 502.2 598 Q503.2 599.8 505.4 598.8 Q507.6 597.4 506.6 595 Q505.2 592.4 502.2 593.4 Q499.2 594.8 500 598.2 Q501 601.2 504.4 601.2 Q506.4 601 507.6 599.6" fill="none" stroke="#a4a4a4" stroke-width="1"/>
 <!-- time area -->
 <rect x="602.4" y="548.4" width="397.6" height="1.6" fill="#161616"/>
 <rect x="602.4" y="550" width="397.6" height="6.2" fill="#6a6a6a"/>
 <rect x="602.4" y="556.2" width="397.6" height="16.2" fill="#1e1e1e"/>
 <rect x="602.4" y="572.4" width="397.6" height="1" fill="#161616"/>
 <rect x="602.4" y="573.4" width="397.6" height="11.8" fill="#606060"/>
 <rect x="607.6" y="585.6" width="392.4" height="2.8" fill="#1dc41d"/>
 <rect x="602.4" y="589.4" width="5.4" height="14.6" fill="#4a4a4a"/>
 <rect x="602.4" y="604" width="397.6" height="54" fill="#2b2b2b"/>
 <rect x="601.4" y="548.4" width="1" height="110" fill="#161616"/>
 <path d="M607.8 550 H605.4 Q602.6 550 602.6 553 Q602.6 556.2 605.4 556.2 H607.8 Z" fill="#2d8ceb"/>
 <path d="M607.6 573.4 H605 Q602.6 573.4 602.6 576 V582.6 Q602.6 585.2 605 585.2 H607.6 Z" fill="#2d8ceb"/>
 <!-- layer bar -->
 <defs><linearGradient id="lb" x1="0" y1="0" x2="0" y2="1"><stop offset="0" stop-color="#bdbbdc"/><stop offset="0.25" stop-color="#aeacd2"/><stop offset="1" stop-color="#9c9ac2"/></linearGradient></defs>
 <rect x="607.8" y="590.2" width="392.2" height="13.6" fill="url(#lb)"/>
 <!-- ticks -->
 <g fill="#8a8a8a"><rect x="699.2" y="569" width="1" height="3.4"/><rect x="791" y="569" width="1" height="3.4"/><rect x="884.2" y="569" width="1" height="3.4"/><rect x="877.4" y="570" width="1" height="2.4"/><rect x="975.4" y="569" width="1" height="3.4"/></g>
 <!-- playhead -->
 <rect x="607" y="562" width="1.2" height="96" fill="#2d8ceb"/>
 <path d="M603 561.8 H611.8 V566 L607.6 572.2 L603 566 Z" fill="#2d8ceb"/>
 <!-- chevron in row (right) -->
 <path d="M575 595.4 L578 598.2 L581 595.4" fill="none" stroke="#a8a8a8" stroke-width="1.1"/>
</svg>
<div class="t" style="left:117px;top:526px;font-size:10px;color:#c0c0c0;letter-spacing:-0.6px">合成 <span class="lat" style="margin-left:2.5px;color:#a4a4a4">1</span></div>
<div class="t blue" id="tc" style="left:3.5px;top:548px;font-size:13px;font-weight:bold;letter-spacing:0.25px">0;00;00;00</div>
<div class="t" style="left:5px;top:559.8px;font-size:8px;color:#2a6cb4;letter-spacing:-0.1px">00000 (29.97 fps)</div>
<div class="t" style="left:80px;top:574.5px;font-size:9px;color:#8a8a8a">#</div>
<div class="t" style="left:105.5px;top:575.3px;font-size:10px;color:#a4a4a4;letter-spacing:-0.3px">源名称</div>
<div class="t" style="left:367px;top:575.3px;font-size:10px;color:#a4a4a4;letter-spacing:-0.6px">模式</div>
<div class="t lat" style="left:427.5px;top:574.5px;color:#8a8a8a;font-size:8.5px">T</div>
<div class="t lat" style="left:441.5px;top:574.5px;color:#8a8a8a;font-size:8.8px">TrkMat</div>
<div class="t" style="left:499.5px;top:575.3px;font-size:10px;color:#a4a4a4;letter-spacing:-0.3px">父级</div>
<div class="t" style="left:292.5px;top:574px;font-size:10.5px;font-style:italic;color:#b4b4b4;letter-spacing:-0.6px">fx</div>
<div class="t" style="left:292.5px;top:589.5px;font-size:10.5px;font-style:italic;color:#c8c8c8;letter-spacing:-0.6px">fx</div>
<div class="t lat" style="left:80.5px;top:590.5px;color:#c0c0c0;font-size:9.5px">1</div>
<div class="t" id="lname" style="left:121.5px;top:590.5px;font-size:9.6px;font-weight:bold;color:#1a1a1a;letter-spacing:-0.04px">bd735d7...378802abcd.png</div>
<div class="t" style="left:370px;top:590px;font-size:10px;color:#c0c0c0;letter-spacing:-0.6px">正常</div>
<div class="t" style="left:519px;top:590px;font-size:10px;color:#c0c0c0">无</div>
<div class="abs" style="left:602.4px;top:556px;width:40px;height:16px;overflow:hidden"><div class="t lat rl" style="left:-4px;top:-0.5px">0:00s</div></div>
<div class="t lat rl" style="left:687.5px">00:15s</div>
<div class="t lat rl" style="left:779.5px">00:30s</div>
<div class="t lat rl" style="left:872.5px">0l:45s</div>
<div class="t lat rl" style="left:963px">01:00s</div>
</body>
</html>
